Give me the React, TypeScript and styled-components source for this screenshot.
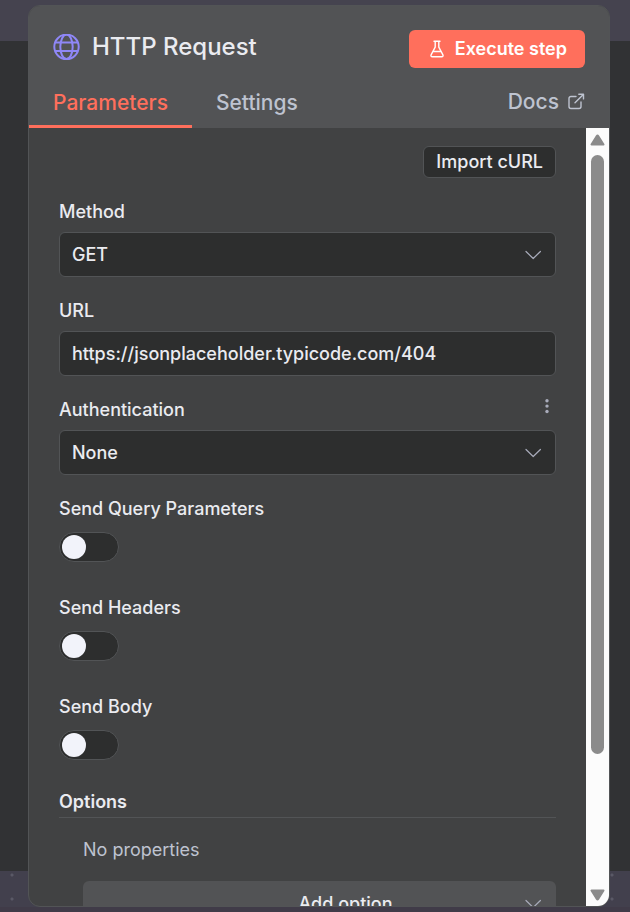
import React, { useId, useState } from 'react';
import styled, { createGlobalStyle } from 'styled-components';

const c = {
  header: '#525355',
  body: '#414243',
  field: '#2d2e2e',
  line: '#525456',
  text: '#eaebf0',
  muted: '#bec3d0',
  icon: '#a9acbb',
  accent: '#ff6f5c',
};

const GlobalStyle = createGlobalStyle`
  *, *::before, *::after { box-sizing: border-box; }
  body {
    margin: 0;
    font-family: Inter, "Liberation Sans", sans-serif;
    font-size: 18px;
    font-weight: 500;
    line-height: 24px;
    color: ${c.text};
  }
  button, input, select { font: inherit; color: inherit; margin: 0; }
`;

const Backdrop = styled.div`
  height: 100vh;
  padding: 5px 20px 5px 28px;
  background:
    radial-gradient(circle at 12px 4px, #5a5966 1px, transparent 2px) 0 calc(100% + 7px) / 600px 24px repeat-x,
    radial-gradient(circle at 12px 4px, #5a5966 1px, transparent 2px) 0 calc(100% - 17px) / 600px 24px repeat-x,
    linear-gradient(#403b48, #403b48) 0 100% / 100% 5px no-repeat,
    linear-gradient(#45434f, #45434f) 0 0 / 100% 41px no-repeat,
    linear-gradient(#42404d, #42404d) 0 100% / 100% 41px no-repeat,
    #313234;
`;

const Panel = styled.main`
  height: 100%;
  display: flex;
  flex-direction: column;
  border: 1px solid ${c.line};
  border-radius: 12px;
  overflow: hidden;
  background: ${c.body};
`;

const Header = styled.header`
  background: ${c.header};
  flex: none;
`;

const TitleRow = styled.div`
  display: flex;
  align-items: center;
  justify-content: space-between;
  padding: 24px 24px 0;
`;

const Title = styled.h1`
  display: flex;
  align-items: center;
  gap: 12px;
  margin: 0 0 4px;
  font-size: 24px;
  font-weight: 500;
  line-height: 32px;
`;

const ExecuteButton = styled.button`
  display: flex;
  align-items: center;
  gap: 8px;
  height: 38px;
  padding: 0 18px;
  border: 0;
  border-radius: 6px;
  background: ${c.accent};
  color: #fff;
  font-weight: 600;
`;

const TabRow = styled.nav`
  display: flex;
  margin-top: 10px;
`;

const Tab = styled.button<{ $active?: boolean }>`
  height: 50px;
  padding: 2px 24px 0;
  border: 0;
  border-bottom: 3px solid ${(p) => (p.$active ? c.accent : 'transparent')};
  background: none;
  color: ${(p) => (p.$active ? c.accent : c.muted)};
  font-size: 21px;
  line-height: 28px;
`;

const DocsLink = styled.a`
  display: flex;
  align-items: center;
  gap: 8px;
  height: 48px;
  margin-left: auto;
  padding: 0 24px 0 0;
  color: ${c.muted};
  font-size: 21px;
  line-height: 28px;
  text-decoration: none;
`;

const Body = styled.div`
  display: flex;
  flex: 1;
  min-height: 0;
`;

const Form = styled.form`
  flex: 1;
  min-width: 0;
  display: flex;
  flex-direction: column;
  gap: 22px;
  padding: 18px 30px;
  overflow-y: auto;
  scrollbar-width: none;
  & > * { flex: none; }
`;

const ImportButton = styled.button`
  align-self: flex-end;
  height: 32px;
  padding: 0 12px;
  border: 1px solid ${c.line};
  border-radius: 6px;
  background: ${c.field};
`;

const Field = styled.div`
  display: flex;
  flex-direction: column;
  gap: 8px;
`;

const LabelRow = styled.div`
  display: flex;
  justify-content: space-between;
  align-items: center;
  height: 24px;
`;

const MenuButton = styled.button`
  display: flex;
  align-items: flex-start;
  width: 18px;
  height: 24px;
  padding: 0;
  border: 0;
  background: none;
`;

const Control = styled.div`
  position: relative;
  display: flex;
`;

const Select = styled.select`
  appearance: none;
  width: 100%;
  height: 45px;
  padding: 0 48px 0 12px;
  border: 1px solid ${c.line};
  border-radius: 6px;
  background: ${c.field};
`;

const Input = styled.input`
  width: 100%;
  height: 45px;
  padding: 0 12px;
  border: 1px solid ${c.line};
  border-radius: 6px;
  background: ${c.field};
`;

const ControlIcon = styled.span`
  position: absolute;
  right: 14px;
  top: 0;
  bottom: 0;
  display: flex;
  align-items: center;
  pointer-events: none;
`;

const SwitchField = styled.div`
  display: flex;
  flex-direction: column;
  gap: 11px;
  padding-bottom: 12px;
`;

const Switch = styled.input`
  appearance: none;
  width: 60px;
  height: 30px;
  border: 1px solid ${c.line};
  border-radius: 15px;
  background: ${c.field};
  display: flex;
  align-items: center;
  padding: 0 2px;
  &::before {
    content: '';
    width: 24px;
    height: 24px;
    border-radius: 50%;
    background: #f2f3fa;
  }
  &:checked { justify-content: flex-end; background: ${c.accent}; }
`;

const Options = styled.section`
  display: flex;
  flex-direction: column;
  margin-top: -4px;
`;

const OptionsTitle = styled.h2`
  margin: 0;
  padding-bottom: 3px;
  border-bottom: 1px solid ${c.line};
  font-size: 18px;
  font-weight: 600;
  line-height: 24px;
`;

const OptionsBody = styled.div`
  display: flex;
  flex-direction: column;
  gap: 19px;
  padding: 20px 0 0 24px;
`;

const Empty = styled.p`
  margin: 0;
  color: ${c.muted};
  font-weight: 400;
`;

const AddButton = styled.button`
  position: relative;
  width: 100%;
  height: 45px;
  padding: 0 0 0 52px;
  border: 0;
  border-radius: 6px;
  background: ${c.header};
`;

const Scrollbar = styled.div`
  flex: none;
  width: 23px;
  display: flex;
  flex-direction: column;
  align-items: center;
  padding: 6px 0 5px;
  background: #fcfcfc;
`;

const Track = styled.div`
  flex: 1;
  width: 13px;
  margin: 9px 0;
`;

const Thumb = styled.div`
  height: 82.6%;
  border-radius: 7px;
  background: #8b8b8b;
`;

const Globe = () => (
  <svg width="27" height="27" viewBox="0 0 27 27" fill="none" stroke="#8f87f7" strokeWidth="2" aria-hidden="true">
    <circle cx="13.5" cy="12.8" r="12.2" />
    <ellipse cx="13.5" cy="12.8" rx="6.2" ry="12.2" />
    <path d="M2.200 8.500h22.600M2.200 17h22.600" />
  </svg>
);

const Flask = () => (
  <svg width="20" height="20" viewBox="0 0 20 20" fill="none" stroke="#fff" strokeWidth="1.4" strokeLinecap="round" strokeLinejoin="round" aria-hidden="true">
    <path d="M7 2.2h6M8.200 2.200v6L4.200 15.600c-.7 1.400-.1 2.200 1.200 2.200h9.200c1.300 0 1.900-.8 1.200-2.200L11.800 8.200v-6M6.200 12.500h7.600" />
  </svg>
);

const External = () => (
  <svg width="18" height="18" viewBox="0 0 18 18" fill="none" stroke={c.muted} strokeWidth="1.400" strokeLinecap="round" strokeLinejoin="round" aria-hidden="true">
    <path d="M9 3.500H4a2 2 0 0 0-2 2v8a2 2 0 0 0 2 2h8a2 2 0 0 0 2-2V9M11.800 1.200h4.700v4.700M16.300 1.400L8 9.700" />
  </svg>
);

const Chevron = () => (
  <svg width="17" height="10" viewBox="0 0 17 10" fill="none" stroke={c.icon} strokeWidth="1.200" strokeLinecap="round" strokeLinejoin="round" aria-hidden="true">
    <path d="M1 1.500L8.200 8.500l7.200-7" />
  </svg>
);

const Dots = () => (
  <svg width="18" height="18" viewBox="0 0 18 18" fill={c.icon} aria-hidden="true">
    <circle cx="9" cy="2.700" r="1.700" />
    <circle cx="9" cy="8.100" r="1.700" />
    <circle cx="9" cy="13.500" r="1.700" />
  </svg>
);

const Arrow = ({ down = false }: { down?: boolean }) => (
  <svg width="15" height="12" viewBox="0 0 15 12" fill="#8b8b8b" stroke="#8b8b8b" strokeWidth="2" strokeLinejoin="round" aria-hidden="true">
    <path d={down ? 'M1.500 1.500h12l-5.300 8.500q-.7 1-1.400 0z' : 'M1.500 10.500h12L8.200 2q-.7-1-1.400 0z'} />
  </svg>
);

function SelectField({ label, options, menu }: { label: string; options: string[]; menu?: boolean }) {
  const id = useId();
  return (
    <Field>
      <LabelRow>
        <label htmlFor={id}>{label}</label>
        {menu && (
          <MenuButton type="button" aria-label={`${label} actions`}>
            <Dots />
          </MenuButton>
        )}
      </LabelRow>
      <Control>
        <Select id={id}>
          {options.map((o) => (
            <option key={o}>{o}</option>
          ))}
        </Select>
        <ControlIcon>
          <Chevron />
        </ControlIcon>
      </Control>
    </Field>
  );
}

function ToggleField({ label }: { label: string }) {
  const id = useId();
  const [on, setOn] = useState(false);
  return (
    <SwitchField>
      <label htmlFor={id}>{label}</label>
      <Switch id={id} type="checkbox" role="switch" checked={on} onChange={() => setOn(!on)} />
    </SwitchField>
  );
}

export default function App() {
  const [url, setUrl] = useState('https://jsonplaceholder.typicode.com/404');
  return (
    <>
      <GlobalStyle />
      <Backdrop>
        <Panel>
          <Header>
            <TitleRow>
              <Title>
                <Globe />
                HTTP Request
              </Title>
              <ExecuteButton type="button">
                <Flask />
                Execute step
              </ExecuteButton>
            </TitleRow>
            <TabRow>
              <Tab type="button" $active>Parameters</Tab>
              <Tab type="button">Settings</Tab>
              <DocsLink href="#docs">
                Docs
                <External />
              </DocsLink>
            </TabRow>
          </Header>
          <Body>
            <Form onSubmit={(e) => e.preventDefault()}>
              <ImportButton type="button">Import cURL</ImportButton>
              <SelectField label="Method" options={['GET']} />
              <Field>
                <LabelRow>
                  <label htmlFor="url">URL</label>
                </LabelRow>
                <Input id="url" value={url} onChange={(e) => setUrl(e.target.value)} />
              </Field>
              <SelectField label="Authentication" options={['None']} menu />
              <ToggleField label="Send Query Parameters" />
              <ToggleField label="Send Headers" />
              <ToggleField label="Send Body" />
              <Options>
                <OptionsTitle>Options</OptionsTitle>
                <OptionsBody>
                  <Empty>No properties</Empty>
                  <AddButton type="button">
                    Add option
                    <ControlIcon>
                      <Chevron />
                    </ControlIcon>
                  </AddButton>
                </OptionsBody>
              </Options>
            </Form>
            <Scrollbar aria-hidden="true">
              <Arrow />
              <Track>
                <Thumb />
              </Track>
              <Arrow down />
            </Scrollbar>
          </Body>
        </Panel>
      </Backdrop>
    </>
  );
}
